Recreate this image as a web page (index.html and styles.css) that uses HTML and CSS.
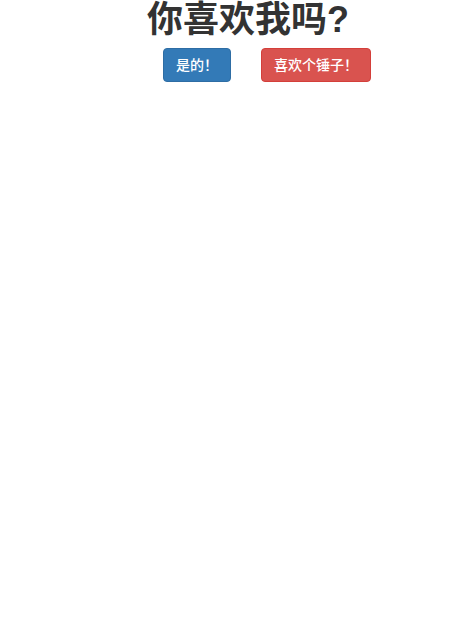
FILE: index.html
```html
<!DOCTYPE html>
<html lang="zh">
<head>
<meta charset="utf-8">
<title>你喜欢我吗?</title>
<link rel="stylesheet" href="styles.css">
</head>
<body>
<div class="wrap">
  <h1 class="title">你喜欢我吗?</h1>
  <div class="actions">
    <button class="btn btn-primary">是的！</button>
    <button class="btn btn-danger">喜欢个锤子！</button>
  </div>
</div>
</body>
</html>
```
FILE: styles.css
```css
html, body {
  margin: 0;
  padding: 0;
  background: #fff;
}
body {
  font-family: "Liberation Sans", "Noto Sans CJK SC", sans-serif;
  font-size: 14px;
  line-height: 1.42857;
  color: #333;
}
.wrap {
  padding-left: 147px;
}
.title {
  margin: 0;
  font-family: "Liberation Sans", "Noto Sans CJK SC", sans-serif;
  font-size: 36px;
  font-weight: 700;
  line-height: 1.1;
  color: #333;
}
.actions {
  display: flex;
  gap: 30px;
  margin-top: 8px;
  padding-left: 16px;
}
.btn {
  display: inline-block;
  box-sizing: border-box;
  height: 34px;
  padding: 6px 12px;
  font-family: "Liberation Sans", "Noto Sans CJK SC", sans-serif;
  font-size: 14px;
  font-weight: 500;
  line-height: 20px;
  color: #fff;
  border: 1px solid transparent;
  border-radius: 4px;
  cursor: pointer;
}
.btn-primary {
  background: #337ab7;
  border-color: #2e6da4;
}
.btn-danger {
  background: #d9534f;
  border-color: #d43f3a;
}
```
